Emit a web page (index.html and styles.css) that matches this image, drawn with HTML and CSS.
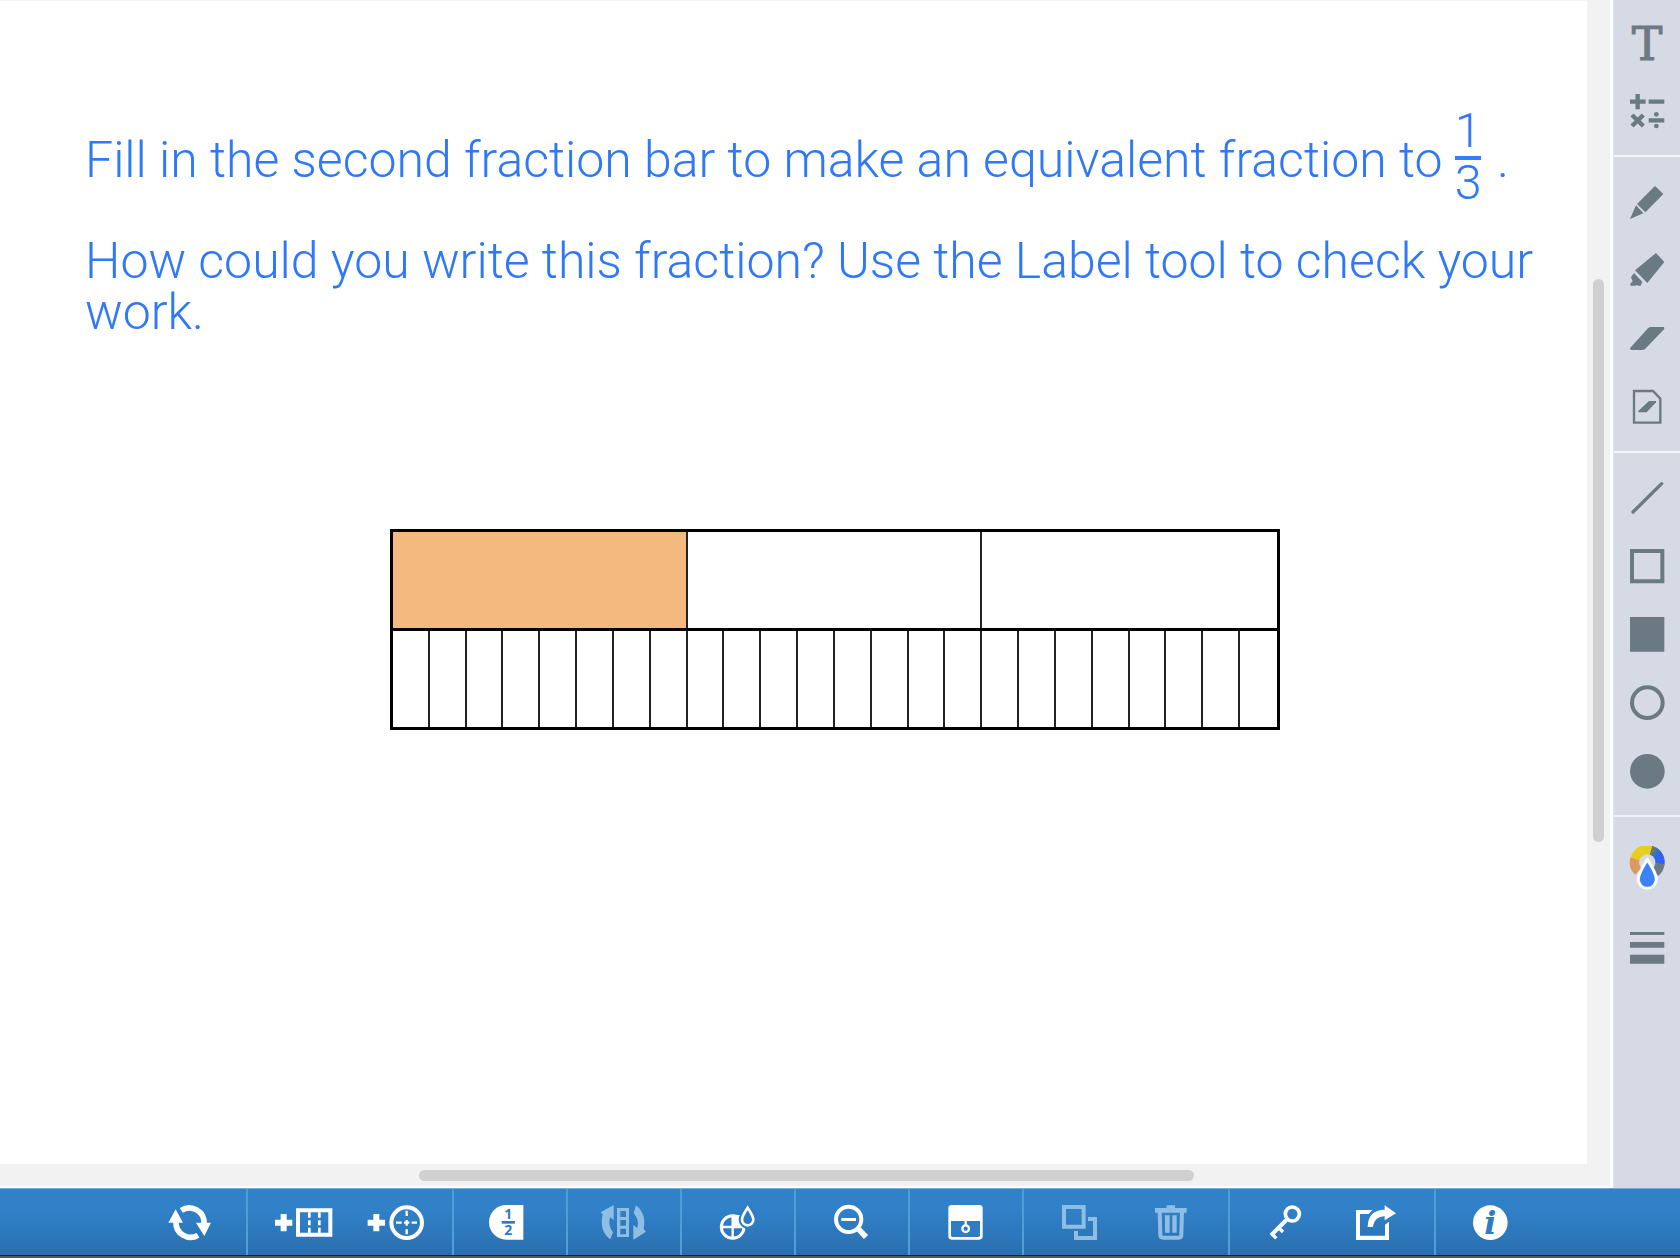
FILE: index.html
```html
<!DOCTYPE html>
<html lang="en">
<head>
<meta charset="utf-8">
<title>Fractions</title>
<link rel="stylesheet" href="styles.css">
</head>
<body>
<div class="app">
  <div class="workspace">
    <main class="canvas">
      <div class="prompt">
        <p>Fill in the second fraction bar to make an equivalent fraction to <span class="fraction"><span class="num">1</span><span class="den">3</span></span> .</p>
        <p>How could you write this fraction? Use the Label tool to check your work.</p>
      </div>
      <div class="model">
        <div class="bars">
          <div class="bar thirds"><i class="filled"></i><i></i><i></i></div>
          <div class="bar parts"><i></i><i></i><i></i><i></i><i></i><i></i><i></i><i></i><i></i><i></i><i></i><i></i><i></i><i></i><i></i><i></i><i></i><i></i><i></i><i></i><i></i><i></i><i></i><i></i></div>
        </div>
      </div>
    </main>
    <div class="track-v"><span class="thumb"></span></div>
    <div class="track-h"><span class="thumb"></span></div>
    <aside class="tools">
      <div class="tool-group first">
        <button class="tool letter" aria-label="Text">T</button>
        <button class="tool" aria-label="Math"><svg viewBox="195 264 132 132"><g class="line" stroke-width="13"><path d="M210 305H257M233 282V328M266 305H313M266 361H313M216 345L250 378M250 345L216 378"/></g><circle cx="289" cy="343" r="7"/><circle cx="289" cy="378" r="7"/></svg></button>
      </div>
      <div class="tool-group">
        <button class="tool" aria-label="Pencil"><svg viewBox="195 540 132 132"><path d="M285 558L310 582L256 637L231 612ZM228 616L250 640L210 657Z"/></svg></button>
        <button class="tool" aria-label="Highlighter"><svg viewBox="195 24 132 132"><path d="M288 39L313 66L262 129L225 91ZM222 99L247 125L242 137H234L231 134L227 137H211V131L218 124L213 112Z"/></svg></button>
        <button class="tool" aria-label="Eraser"><svg viewBox="195 228 132 132"><path d="M272 261H311Q315 263 312 268L256 326Q252 330 248 330H213Q209 328 211 323L264 265Q268 261 272 261Z"/></svg></button>
        <button class="tool" aria-label="Clear page"><svg viewBox="195 432 132 132"><path class="line" stroke-width="7" d="M222 453H279L301 476V548H222Z"/><path d="M267 483H288V487L260 517H235V513Z"/></svg></button>
      </div>
      <div class="tool-group">
        <button class="tool" aria-label="Line"><svg viewBox="195 48 132 132"><path class="line" stroke-width="10" stroke-linecap="round" d="M219 156L305 71"/></svg></button>
        <button class="tool" aria-label="Square"><svg viewBox="195 252 132 132"><path class="line" stroke-width="12" d="M216 273H307V364H216Z"/></svg></button>
        <button class="tool" aria-label="Filled square"><svg viewBox="195 456 132 132"><path d="M210 471H313V575H210Z"/></svg></button>
        <button class="tool" aria-label="Circle"><svg viewBox="195 660 132 132"><circle class="line" stroke-width="12" cx="262" cy="728" r="46"/></svg></button>
        <button class="tool" aria-label="Filled circle"><svg viewBox="195 864 132 132"><circle cx="262" cy="934" r="52"/></svg></button>
      </div>
      <div class="tool-group">
        <button class="tool tall" aria-label="Color"><svg viewBox="195 138 132 132"><g fill="none" stroke-width="28"><path stroke="#dc9a63" d="M235 214A38 38 0 0 1 225 175"/><path stroke="#e8ce1c" d="M225 177A38 38 0 0 1 274 151"/><path stroke="#6f7668" d="M273 151A38 38 0 0 1 284 156"/><path stroke="#2c79b0" d="M283 155A38 38 0 0 1 292 163"/><path stroke="#3560f0" d="M291 162A38 38 0 0 1 300 192"/><path stroke="#6b7983" d="M300 191A38 38 0 0 1 286 217"/></g><path d="M262 179Q235 220 235 238A27 27 0 0 0 289 238Q289 220 262 179Z" fill="#3b82f6" stroke="#fff" stroke-width="9"/></svg></button>
        <button class="tool tall" aria-label="Line width"><svg viewBox="195 378 132 132"><path d="M210 396H313V405H210ZM210 426H313V443H210ZM210 464H313V491H210Z"/></svg></button>
      </div>
    </aside>
  </div>
  <nav class="toolbar">
    <div class="group">
      <button class="action" aria-label="Reset"><svg viewBox="120 120 180 132"><path class="line" stroke-width="17" d="M184 151A44 44 0 0 1 252 190M234 226A44 44 0 0 1 168 186"/><path d="M228 188H273L253 228ZM145 188H189L167 148Z"/></svg></button>
    </div>
    <div class="group">
      <button class="action" aria-label="Add bar"><svg viewBox="462 120 180 132"><path d="M482 162H500V179H517V197H500V214H482V197H465V179H482Z"/><path class="line" stroke-width="12" d="M534 151H631V224H534Z"/><path class="line" stroke-width="8" d="M568 157V173M568 181V196M568 203V219M598 157V173M598 181V196M598 203V219"/></svg></button>
      <button class="action" aria-label="Add circle"><svg viewBox="738 120 180 132"><path d="M760 162H778V179H795V197H778V214H760V197H743V179H760Z"/><circle class="line" stroke-width="12" cx="860" cy="188" r="46"/><path class="line" stroke-width="7" d="M860 152V168M860 180V197M860 208V223M828 188H845M852 188H868M875 188H891"/></svg></button>
    </div>
    <div class="group">
      <button class="action" aria-label="Label"><svg viewBox="120 120 180 132"><path d="M250 135H199A52 52 0 0 0 199 239H250Z"/><path class="cut" d="M185 183H225V191H185Z"/><text class="cut digit" x="205" y="178">1</text><text class="cut digit" x="205" y="226">2</text></svg></button>
    </div>
    <div class="group">
      <button class="action" aria-label="Rotate" disabled><svg viewBox="462 120 180 132"><path fill-rule="evenodd" d="M531 144H567V231H531ZM541 153V171H558V153ZM541 180V197H558V180ZM541 206V223H558V206Z"/><path d="M521 135V180L510 172Q503 198 519 217L511 238Q477 215 488 163L482 157ZM588 136Q620 162 611 207L618 215L580 239V195L592 204Q599 179 581 159Z"/></svg></button>
    </div>
    <div class="group">
      <button class="action" aria-label="Fill"><svg viewBox="804 120 180 132"><circle class="line" stroke-width="9" cx="878" cy="201" r="34"/><path d="M878 165H905L914 201H878Z"/><path class="line" stroke-width="7" d="M878 165V237M842 201H914"/><path class="cut" d="M923 143Q906 168 906 179A17 17 0 0 0 940 179Q940 168 923 143Z" stroke="#2f7cc2" stroke-width="20"/><path class="line" stroke-width="8" d="M923 143Q906 168 906 179A17 17 0 0 0 940 179Q940 168 923 143Z"/></svg></button>
    </div>
    <div class="group">
      <button class="action" aria-label="Zoom out"><svg viewBox="126 120 180 132"><circle class="line" stroke-width="12" cx="206" cy="178" r="38"/><path d="M184 174H228V183H184Z"/><path class="line" stroke-width="11" d="M232 204L242 214"/><path class="line" stroke-width="17" d="M237 209L258 231"/></svg></button>
    </div>
    <div class="group">
      <button class="action" aria-label="Screen shade"><svg viewBox="468 120 180 132"><rect x="505" y="135" width="103" height="104" rx="10"/><path class="cut" d="M513 183H600V226Q600 231 595 231H518Q513 231 513 226Z"/><path class="line" stroke-width="7" d="M557 183V196"/><circle class="line" stroke-width="7" cx="557" cy="206" r="10"/></svg></button>
    </div>
    <div class="group">
      <button class="action" aria-label="Duplicate" disabled><svg viewBox="810 120 180 132"><path class="line" stroke-width="12" d="M852 141H911V200H852ZM846 141H852M924 177H945V234H888V213"/></svg></button>
      <button class="action" aria-label="Delete" disabled><svg viewBox="96 120 180 132"><path d="M135 144H170V136H195V144H230V158H135ZM165 166H179V218H165ZM187 166H200V218H187Z"/><path class="line" stroke-width="12" d="M149 152L151 225Q151 233 160 233H205Q214 233 214 225L216 152"/></svg></button>
    </div>
    <div class="group">
      <button class="action" aria-label="Settings"><svg viewBox="438 120 180 132"><circle class="line" stroke-width="11" cx="547" cy="162" r="21"/><path class="line" stroke-width="12" d="M532 177L483 226"/><path class="line" stroke-width="10" d="M505 202L519 216M486 222L499 235"/></svg></button>
      <button class="action" aria-label="Share"><svg viewBox="714 120 180 132"><path d="M738 150H787L776 162H750V227H825V194L837 185V240H738ZM824 136L858 160L824 181V169Q795 168 788 201H773Q774 150 824 149Z"/></svg></button>
    </div>
    <div class="group">
      <button class="action" aria-label="Information"><svg viewBox="1056 120 180 132"><circle cx="1141" cy="188" r="52"/><text class="cut info" x="1141" y="221">i</text></svg></button>
    </div>
  </nav>
</div>
</body>
</html>
```
FILE: styles.css
```css
* { box-sizing: border-box; }

body {
  margin: 0;
  background: #5c5650;
}

.app {
  display: flex;
  flex-direction: column;
  min-height: 100vh;
  padding-bottom: 2px;
}

/* Canvas, its scroll tracks and the side tools */
.workspace {
  flex: 1;
  display: grid;
  grid-template-columns: 1fr 23px 70px;
  grid-template-rows: 1fr 24px;
  background: #fff;
}

.canvas {
  grid-area: 1 / 1;
  padding-top: 107px;
  border-top: 1px solid #f4f4f4;
  background: #fff;
}

.prompt {
  padding: 0 40px 0 85px;
  color: #2f78f8;
  font: 300 50px/51px Roboto, sans-serif;
}

.prompt p { margin: 0 0 30px; }

.fraction {
  display: inline-grid;
  width: 26px;
  margin: 0 4px 0 0;
  vertical-align: 30px;
  font-size: 48px;
  line-height: 46px;
  text-align: center;
}

.num {
  padding-bottom: 2px;
  border-bottom: 4px solid #347cf8;
}

.model {
  display: grid;
  grid-template-columns: 390fr 890fr 307fr;
  padding: 161px 0 80px;
}

.bars {
  grid-column: 2;
  border: 3px solid #000;
}

.bar {
  display: grid;
  height: 96px;
}

.thirds { grid-template-columns: repeat(3, 1fr); }

.parts {
  grid-template-columns: repeat(24, 1fr);
  height: 99px;
  border-top: 3px solid #000;
}

.bar i:not(:last-child) { border-right: 2px solid #222; }

.filled { background: #f4b97f; }

.track-v,
.track-h {
  display: flex;
  background: #f2f2f2;
}

.track-v {
  grid-area: 1 / 2;
  flex-direction: column;
  align-items: center;
}

.track-h {
  grid-area: 2 / 1 / 3 / 3;
  align-items: center;
  border-bottom: 2px solid #fff;
}

.thumb {
  flex: 563 0 0;
  width: 11px;
  border-radius: 6px;
  background: #d0d0d0;
}

.track-v::before { content: ""; flex: 279 0 0; }
.track-v::after { content: ""; flex: 322 0 0; }

.track-h .thumb {
  flex: 775 0 0;
  height: 11px;
}

.track-h::before { content: ""; flex: 419 0 0; }
.track-h::after { content: ""; flex: 416 0 0; }

button {
  display: flex;
  align-items: center;
  justify-content: center;
  padding: 0;
  border: 0;
  background: none;
}

svg { fill: currentColor; }

.line {
  fill: none;
  stroke: currentColor;
}

.tools {
  grid-area: 1 / 3 / 3 / 4;
  margin-left: 3px;
  border-left: 1px solid #dfe4ec;
  background: #d5dae5;
}

.tool-group {
  padding: 11px 0;
  border-bottom: 2px solid #f2f5f9;
}

.tool-group.first { padding: 8px 0 11px; }
.tool-group:last-child { border-bottom: 0; }

.tool {
  width: 100%;
  height: 68px;
  color: #6b7983;
}

.tool.tall { height: 80px; }

.tool svg {
  width: 44px;
  height: 44px;
}

.letter {
  padding-top: 4px;
  font: 46px/64px "DejaVu Serif", serif;
  -webkit-text-stroke: 1px currentColor;
}

/* Bottom actions */
.toolbar {
  display: flex;
  justify-content: center;
  height: 68px;
  border-top: 1px solid #6aaedb;
  border-bottom: 1px solid #222;
  background: linear-gradient(#3181c9 30%, #2a6fb0);
}

.group {
  display: flex;
  padding: 0 10px;
  border-left: 2px solid #4f9fd6;
}

.group:first-child { border-color: transparent; }

.action {
  width: 92px;
  color: #fff;
}

.action:disabled { color: #8fbee4; }

.action svg {
  width: 60px;
  height: 44px;
}

.cut { fill: #2f7cc2; }

.digit {
  font: bold 42px "Open Sans", sans-serif;
  text-anchor: middle;
}

.info {
  font: italic bold 96px "DejaVu Serif", serif;
  text-anchor: middle;
}
```
